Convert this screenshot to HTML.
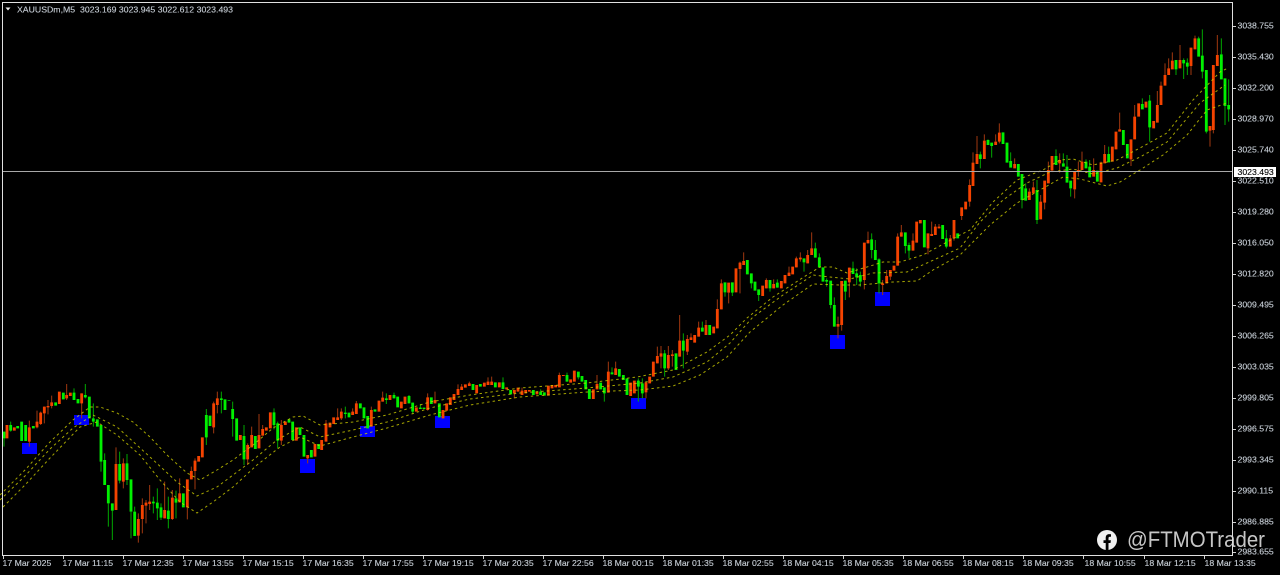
<!DOCTYPE html>
<html><head><meta charset="utf-8"><title>XAUUSDm,M5</title>
<style>
html,body{margin:0;padding:0;background:#000;width:1280px;height:575px;overflow:hidden}
svg{display:block}
text{font-family:"Liberation Sans",sans-serif;font-size:8.7px;fill:#c9d0d8;stroke:#c9d0d8;stroke-width:.12}
.ow,.gw,.ob,.gb{fill:none}
.ow{stroke:#a03810;stroke-width:3}
.gw{stroke:#00a800;stroke-width:3}
.ob{stroke:#f54300;stroke-width:8.500}
.gb{stroke:#00f000;stroke-width:8.500}
.y{fill:none;stroke:#d0d000;stroke-width:1;stroke-dasharray:2.500 3;opacity:.8}
</style></head><body>
<svg width="1280" height="575" viewBox="0 0 1280 575" xmlns="http://www.w3.org/2000/svg">
<rect width="1280" height="575" fill="#000"/>
<!-- signal blocks -->
<g fill="#0000ff">
<rect x="22" y="443" width="15" height="11"/><rect x="74" y="415" width="15" height="10"/><rect x="300" y="459" width="15" height="14"/><rect x="360" y="426" width="15" height="11"/><rect x="435" y="416" width="15" height="12"/><rect x="631" y="398" width="15" height="11"/><rect x="830" y="335" width="15" height="14"/><rect x="875" y="292" width="15" height="14"/>
</g>
<!-- segment 1 -->
<g transform="translate(0,370) scale(.33333)">
<path class="ow" d="M88 152V230M111 122V175M122 125V165M133 110V160M144 90V133M155 77V115M200 42V90M245 70V145M348 232V420M370 265V355M415 430V518M427 385V490M438 390V460M449 345V420M494 335V445M517 360V450M539 325V397M562 412V448M574 290V328M585 265V358M641 95V190M652 65V130M743 220V285M755 170V232M777 132V195M788 165V197M844 150V225M923 255V280"/>
<path class="gw" d="M12 205V230M32 155V185M222 55V90M256 42V85M280 100V170M303 275V305M314 250V270M325 400V470M337 422V510M359 245V340M381 252V345M393 425V505M404 410V425M460 380V430M472 355V450M483 400V450M505 380V475M528 362V445M619 117V225M664 65V130M698 95V200M732 165V285M822 115V178M833 155V235"/>
<path class="ob" d="M21 165V205M43 172V182M88 172V215M111 155V172M122 128V162M133 110V130M144 108V112M155 97V108M178 65V102M200 75V85M211 68V78M245 70V100M348 282V420M370 280V335M415 447V497M427 405V447M438 398V407M449 395V402M494 420V445M517 383V447M539 370V397M562 328V412M574 303V328M585 272V303M596 258V275M607 202V262M641 100V172M652 85V105M721 195V210M743 225V268M755 195V232M777 195V235M788 177V197M799 172V182M811 127V175M844 165V212M856 155V165M889 172V212M923 255V265M945 222V260"/>
<path class="gb" d="M12 185V205M32 165V182M53 168V175M65 155V213M77 165V213M100 168V175M167 97V107M190 68V88M222 68V90M234 87V100M256 75V82M268 80V145M280 145V155M292 148V170M303 165V275M314 270V345M325 345V400M337 400V422M359 282V332M381 280V330M393 328V425M404 425V498M460 395V400M472 398V415M483 412V443M505 422V447M528 385V398M550 370V412M619 135V202M630 137V168M664 85V90M675 88V120M687 90V92M698 117V147M710 145V212M732 198V268M766 198V237M822 127V165M833 160V212M867 148V158M878 155V210M900 172V195M912 195V260M934 240V262M956 222V237"/>
</g>
<!-- segment 2 -->
<g transform="translate(320,340) scale(.33333)">
<path class="ow" d="M18 240V305M53 205V240M64 205V240M98 205V225M109 183V222M154 200V260M188 155V185M323 160V212M345 155V190M414 133V165M425 132V150M448 125V138M504 112V135M515 110V135M583 160V175M606 143V165M718 98V142M831 105V148M865 65V158M887 65V105"/>
<path class="gw" d="M76 200V235M199 160V192M222 158V175M267 165V190M278 188V220M301 192V207M549 112V147M662 148V165M741 98V125M775 112V118M853 160V185M876 82V103M955 115V185"/>
<path class="ob" d="M5 300V330M18 250V305M30 248V262M41 232V252M53 232V240M64 215V235M98 215V225M109 190V222M154 210V260M177 182V215M188 173V185M210 165V180M244 185V205M255 170V192M289 202V215M323 172V210M345 180V190M369 210V235M380 190V212M391 172V195M402 162V180M414 147V165M425 140V150M436 133V143M448 130V138M470 135V160M493 128V140M504 125V135M515 125V135M538 127V142M560 142V148M583 150V160M594 143V155M606 152V165M617 150V160M628 150V155M651 155V163M685 137V167M696 135V145M707 135V142M718 105V142M730 105V108M752 118V128M763 92V125M820 148V177M831 132V148M865 95V158M887 85V105M932 128V168M943 122V160"/>
<path class="gb" d="M76 218V222M87 218V232M121 190V205M132 202V235M143 228V265M165 208V215M199 175V180M222 165V175M233 170V202M267 168V190M278 188V215M301 203V207M312 203V207M334 172V192M358 190V232M459 132V150M481 132V140M526 127V142M549 127V147M572 150V163M640 150V165M662 155V165M673 157V167M741 105V125M775 95V112M786 108V125M797 120V148M808 147V177M842 128V148M853 142V160M876 97V103M898 87V110M910 105V120M921 115V165M955 122V140"/>
</g>
<!-- segment 3 -->
<g transform="translate(640,220) scale(.33333)">
<path class="ow" d="M18 517V535M52 380V430M63 378V445M85 378V450M97 390V440M119 285V410M142 345V405M153 340V360M176 305V350M198 300V345M232 238V325M244 178V268M266 218V250M300 125V220M311 97V135M379 175V205M401 178V205M447 140V168M469 110V142M481 97V125M503 90V130M515 37V105M594 290V355M605 315V332M628 143V232M673 180V208M684 35V70M728 180V225M740 150V190M751 170V180M773 40V137M784 15V50M819 40V92M864 85V103M875 5V48M886 12V45M897 12V25M931 45V80M942 55V62"/>
<path class="gw" d="M7 475V535M74 390V470M130 340V445M187 305V335M255 217V230M277 218V228M334 190V205M356 225V243M390 205V215M412 178V203M492 127V155M526 68V113M538 100V142M560 175V200M572 255V265M583 232V320M616 215V240M639 125V162M650 145V195M661 155V200M695 40V115M706 60V120M717 115V220M796 78V100M807 68V115M919 30V85"/>
<path class="ob" d="M18 487V517M29 470V490M40 425V470M52 408V430M63 400V410M85 405V445M97 403V408M119 362V410M142 357V395M153 352V360M164 345V368M176 323V350M198 315V345M221 320V340M232 267V325M244 190V268M266 188V218M288 145V217M300 128V147M311 123V135M368 197V228M379 180V205M401 192V205M424 183V205M435 165V190M447 158V168M458 140V163M469 115V142M481 113V118M503 105V130M515 85V105M594 312V320M605 183V315M628 143V187M673 68V180M684 60V70M728 190V195M740 168V190M751 150V170M762 137V152M773 50V137M784 37V50M819 62V92M830 5V68M841 0V10M864 40V85M875 42V48M886 20V45M897 20V25M931 55V80M942 0V55"/>
<path class="gb" d="M7 490V520M74 400V445M108 400V450M130 362V392M187 323V335M209 315V345M255 187V217M277 187V218M322 120V163M334 160V190M345 185V212M356 208V225M390 180V205M412 188V203M492 115V127M526 85V113M538 112V142M549 142V185M560 180V185M572 182V255M583 255V320M616 182V215M639 145V162M650 160V172M661 165V185M695 58V90M706 90V120M717 118V190M796 37V78M807 75V92M853 0V82M908 15V57M919 55V80M953 40V55"/>
</g>
<!-- segment 4 -->
<g transform="translate(960,20) scale(.33333)">
<path class="ow" d="M5 588V600M29 478V560M39 397V428M51 348V402M73 343V362M107 343V365M118 310V370M164 415V432M208 505V515M220 485V502M242 525V545M254 548V568M265 425V450M299 400V458M344 508V535M355 425V470M366 395V425M401 415V450M423 425V427M434 375V402M479 278V328M513 418V438M524 255V290M592 213V255M603 185V197M615 130V165M626 115V145M637 97V122M660 75V120M693 138V165M705 47V55M750 320V380M760 330V340M772 45V105"/>
<path class="gw" d="M61 395V445M84 358V375M95 378V413M152 397V423M186 540V565M197 490V505M231 480V612M288 388V408M310 400V430M321 405V440M332 505V530M378 418V425M389 420V440M446 380V402M547 235V252M569 225V365M648 148V165M671 115V177M682 115V165M716 50V55M727 28V175M739 335V340M784 55V103M795 258V315M806 178V305"/>
<path class="ob" d="M5 562V588M17 545V568M29 495V545M39 428V498M51 402V432M73 362V417M107 365V375M118 338V365M164 432V445M208 515V540M220 502V520M242 545V598M254 482V548M265 450V490M276 408V452M299 420V430M344 455V508M355 450V455M366 425V450M401 450V470M423 427V487M434 402V430M457 380V425M468 335V388M479 328V335M513 358V418M524 290V358M536 250V290M558 245V263M581 303V325M592 255V308M603 197V255M615 165V197M626 145V165M637 122V148M660 120V145M693 83V138M705 55V88M750 318V332M760 135V330M772 105V138"/>
<path class="gb" d="M61 403V417M84 360V375M95 368V378M129 337V372M141 368V428M152 423V443M175 432V470M186 462V540M197 505V542M231 510V600M288 408V435M310 430V440M321 440V488M332 482V505M378 425V445M389 440V472M412 452V485M446 402V427M490 330V375M502 372V415M547 252V268M569 242V322M648 120V148M671 120V130M682 128V140M716 55V110M727 107V155M739 150V335M784 103V178M795 175V258M806 255V268"/>
</g>
<!-- bands -->
<polyline class="y" points="0,495 25,470 50,442 73,420 90,407 100,407 117,413 133,422 150,437 167,455 187,473 200,480 217,470 233,460 253,445 273,428 293,417 303,416 320,425 353,422 387,415 430,402 470,395 520,388 587,383 637,377 673,370 707,352 730,335 747,318 773,297 807,275 820,267 833,267 847,273 867,267 883,262 900,262 923,255 960,235 970,230 993,202 1017,180 1043,170 1060,160 1073,159 1093,165 1117,160 1140,148 1167,133 1193,100 1220,72 1228,68"/>
<polyline class="y" points="0,500 25,476 50,449 73,428 93,415 117,427 150,457 177,482 197,496 217,487 233,475 253,460 277,440 300,427 320,437 353,430 387,422 430,408 470,399 520,393 587,388 640,383 673,377 707,362 730,343 753,317 783,295 813,275 830,277 850,279 873,273 907,272 927,263 960,248 980,222 1003,200 1027,183 1050,172 1073,169 1093,174 1117,168 1140,157 1167,142 1200,103 1225,85"/>
<polyline class="y" points="3,507 25,485 50,458 80,427 97,422 117,435 140,455 160,480 180,502 197,513 213,502 233,487 257,465 280,447 300,437 320,446 353,437 387,428 430,415 470,405 520,397 587,392 640,390 673,386 700,375 727,357 750,332 783,305 813,284 840,285 860,285 893,282 917,281 933,270 960,255 990,225 1017,203 1040,190 1063,177 1080,179 1107,186 1120,182 1140,170 1163,155 1187,135 1207,110 1227,103"/>
<!-- bid line -->
<rect x="3" y="171" width="1229" height="1" fill="#a8a8a8"/>
<!-- frame -->
<path d="M2.500 2.500H1232.500V555.500H2.500Z" fill="none" stroke="#e0e0e0" stroke-width="1"/>
<path d="M1233 26.500h3M1233 57.500h3M1233 88.500h3M1233 119.500h3M1233 150.500h3M1233 181.500h3M1233 212.500h3M1233 243.500h3M1233 274.500h3M1233 305.500h3M1233 336.500h3M1233 367.500h3M1233 398.500h3M1233 429.500h3M1233 460.500h3M1233 491.500h3M1233 522.500h3M1233 552.500h3M3.500 556v3M63.500 556v3M123.500 556v3M183.500 556v3M243.500 556v3M303.500 556v3M363.500 556v3M423.500 556v3M483.500 556v3M543.500 556v3M603.500 556v3M663.500 556v3M723.500 556v3M783.500 556v3M843.500 556v3M903.500 556v3M963.500 556v3M1023.500 556v3M1083.500 556v3M1144.500 556v3M1204.500 556v3" stroke="#d0d0d0" fill="none"/>
<!-- title -->
<path d="M5.500 7.500h5l-2.500 3z" fill="#f0f0f0"/>
<text x="17" y="12.500" xml:space="preserve" textLength="216">XAUUSDm,M5  3023.169 3023.945 3022.612 3023.493</text>
<!-- price axis -->
<g transform="translate(-.5,-1)">
<text x="1238" y="29.500">3038.755</text><text x="1238" y="60.500">3035.430</text><text x="1238" y="91.500">3032.200</text><text x="1238" y="122.500">3028.970</text><text x="1238" y="153.500">3025.740</text><text x="1238" y="184.500">3022.510</text><text x="1238" y="215.500">3019.280</text><text x="1238" y="246.500">3016.050</text><text x="1238" y="277.500">3012.820</text><text x="1238" y="308.500">3009.495</text><text x="1238" y="339.500">3006.265</text><text x="1238" y="370.500">3003.035</text><text x="1238" y="401.500">2999.805</text><text x="1238" y="432.500">2996.575</text><text x="1238" y="463.500">2993.345</text><text x="1238" y="494.500">2990.115</text><text x="1238" y="525.500">2986.885</text><text x="1238" y="555.500">2983.655</text>
</g>
<rect x="1234" y="167" width="42" height="10" fill="#fff"/>
<text x="1237.500" y="175" style="fill:#000;stroke:#000">3023.493</text>
<!-- time axis -->
<g transform="translate(-.5,-1)">
<text x="3" y="567">17 Mar 2025</text><text x="63" y="567">17 Mar 11:15</text><text x="123" y="567">17 Mar 12:35</text><text x="183" y="567">17 Mar 13:55</text><text x="243" y="567">17 Mar 15:15</text><text x="303" y="567">17 Mar 16:35</text><text x="363" y="567">17 Mar 17:55</text><text x="423" y="567">17 Mar 19:15</text><text x="483" y="567">17 Mar 20:35</text><text x="543" y="567">17 Mar 22:56</text><text x="603" y="567">18 Mar 00:15</text><text x="663" y="567">18 Mar 01:35</text><text x="723" y="567">18 Mar 02:55</text><text x="783" y="567">18 Mar 04:15</text><text x="843" y="567">18 Mar 05:35</text><text x="903" y="567">18 Mar 06:55</text><text x="963" y="567">18 Mar 08:15</text><text x="1023" y="567">18 Mar 09:35</text><text x="1085" y="567">18 Mar 10:55</text><text x="1145" y="567">18 Mar 12:15</text><text x="1205" y="567">18 Mar 13:35</text>
</g>
<!-- watermark -->
<circle cx="1107" cy="540" r="10" fill="#f0f0f0"/>
<path d="M1105.700 550V543H1103.500V540.300H1105.700V537.800C1105.700 535.300 1107.200 534.100 1109.300 534.100L1111 534.300V536.700H1110C1108.900 536.700 1108.500 537.300 1108.500 538.200V540.300H1110.900L1110.500 543H1108.500V550Z" fill="#000"/>
<text x="1127" y="547" textLength="138" lengthAdjust="spacingAndGlyphs" style="font-size:22px;fill:#dcdcdc;stroke:none;opacity:.9">@FTMOTrader</text>
</svg>
</body></html>
